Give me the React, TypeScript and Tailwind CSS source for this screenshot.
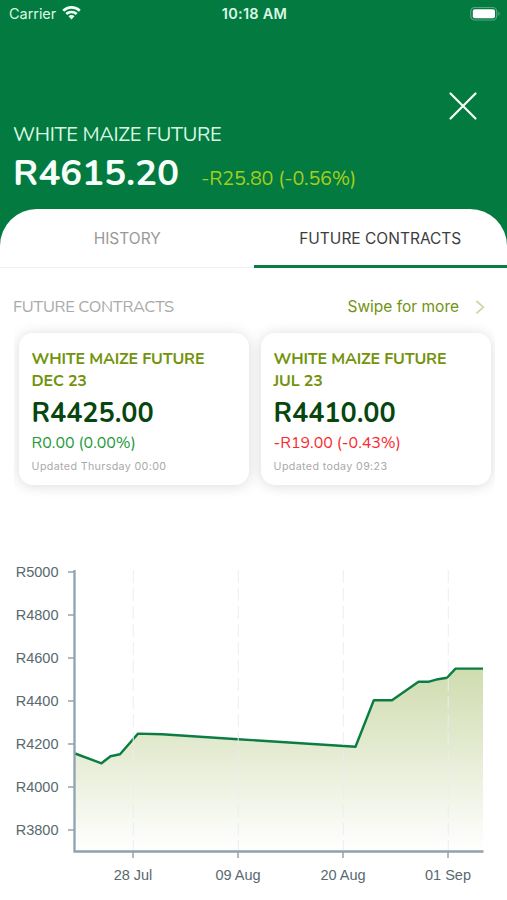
const nunito = "font-['Nunito','Lato',sans-serif]";

const contracts = [
  { month: 'DEC 23', price: 'R4425.00', change: 'R0.00 (0.00%)', tone: 'text-[#1f9a3c]', updated: 'Updated Thursday 00:00' },
  { month: 'JUL 23', price: 'R4410.00', change: '-R19.00 (-0.43%)', tone: 'text-[#f92a30]', updated: 'Updated today 09:23' },
];

const yTicks = [5000, 4800, 4600, 4400, 4200, 4000, 3800];
const xTicks = [
  { x: 133, label: '28 Jul' },
  { x: 238, label: '09 Aug' },
  { x: 343, label: '20 Aug' },
  { x: 448, label: '01 Sep' },
];
const line =
  'M75 753.5L101.5 763.3L110.5 756.2L120 754.3L138 733.6L162 734.3L238 739.2L355.5 746.7L373.8 700.3H392L418.5 681.7H429L438 679.2L447 677.8L455.5 668.6H483';

function StatusBar() {
  return (
    <div className="grid h-7 grid-cols-3 items-center pl-[9px] pr-[6px] font-['Inter',sans-serif] text-[#d9f8e4]">
      <div className="flex items-center gap-[6px]">
        <span className="text-[14.5px] tracking-[-0.05px]">Carrier</span>
        <svg className="-mt-0.5" width="19" height="14" viewBox="0 0 19 14" fill="#eefff4">
          <path d="M9.5 0C5.9 0 2.7 1.4.3 3.7l1.8 2a10.5 10.5 0 0 1 14.8 0l1.8-2A13.2 13.2 0 0 0 9.5 0Z" />
          <path d="M9.5 4.7c-2.3 0-4.5.8-6.1 2.4l1.8 2a6.1 6.1 0 0 1 8.6 0l1.8-2a8.7 8.7 0 0 0-6.1-2.4Z" />
          <path d="M9.5 9.1c-1.2 0-2.2.4-3 1.2l3 3.3 3-3.3c-.8-.8-1.8-1.2-3-1.2Z" />
        </svg>
      </div>
      <span className="-ml-px text-center text-[14.5px] font-semibold tracking-[0.25px]">10:18 AM</span>
      <svg className="-mt-px justify-self-end" width="32" height="16" viewBox="0 0 32 16">
        <rect x="1.7" y="1.5" width="26" height="12.5" rx="4" fill="none" stroke="#5ba579" strokeWidth="1.2" />
        <rect x="3.8" y="3.3" width="22.2" height="9" rx="2" fill="#fff" />
        <path d="M29.3 5.5v4.5c1.8-.8 1.8-3.7 0-4.5Z" fill="#5ba579" />
      </svg>
    </div>
  );
}

function PriceChart() {
  return (
    <svg className="block" width="507" height="350" viewBox="0 550 507 350" fontFamily="'Liberation Sans', sans-serif" fontSize="14.5" fill="#58696f">
      <defs>
        <linearGradient id="area" x1="0" y1="668" x2="0" y2="851" gradientUnits="userSpaceOnUse">
          <stop offset="0" stopColor="#cfdcaf" />
          <stop offset="0.45" stopColor="#e4ebd2" />
          <stop offset="1" stopColor="#fff" />
        </linearGradient>
      </defs>
      <path d={`${line}V851H75Z`} fill="url(#area)" />
      <path d={line} fill="none" stroke="#0b7d43" strokeWidth="2.4" strokeLinejoin="round" />
      {xTicks.map((t) => (
        <g key={t.label}>
          <path d={`M${t.x + 0.3} 570V850`} stroke="#e9eef0" strokeOpacity="0.75" strokeWidth="1.3" strokeDasharray="13 5" />
          <path d={`M${t.x} 852V858`} stroke="#90a4ae" strokeWidth="1.5" />
          <text x={t.x} y="880" textAnchor="middle">{t.label}</text>
        </g>
      ))}
      {yTicks.map((v, i) => (
        <g key={v}>
          <path d={`M68 ${572 + i * 43}H74`} stroke="#90a4ae" strokeWidth="1.5" />
          <text x="58.5" y={577 + i * 43} textAnchor="end">R{v}</text>
        </g>
      ))}
      <path d="M74.5 570V851.5H483.5" fill="none" stroke="#8fa2b1" strokeWidth="2.3" />
    </svg>
  );
}

export default function App() {
  return (
    <div className="flex h-[900px] w-[507px] flex-col overflow-hidden bg-white">
      <div className="bg-[#037a40]">
        <header className="h-[209px]">
          <StatusBar />
          <div className="flex justify-end pr-[29px] pt-[63px]">
            <svg width="30" height="30" viewBox="0 0 30 30" stroke="#f4fff8" strokeWidth="2.2" strokeLinecap="round">
              <path d="M2.5 2.5L27.5 27.5M27.5 2.5L2.5 27.5" />
            </svg>
          </div>
          <div className={`${nunito} pl-[13px]`}>
            <p className="text-[20px] leading-[28px] tracking-[-0.3px] text-[#d9f8e4]">WHITE MAIZE FUTURE</p>
            <div className="flex items-baseline gap-[22px]">
              <span className="text-[36.8px] font-bold leading-[48px] tracking-[-0.1px] text-[#f7fffa]">R4615.20</span>
              <span className="text-[19.8px] tracking-[-0.2px] text-[#a2cf1b]">-R25.80 (-0.56%)</span>
            </div>
          </div>
        </header>
        <nav className="grid h-[59px] grid-cols-2 rounded-t-[37px] bg-white font-['Inter',sans-serif] text-[15.5px]">
          <button className="border-b border-[#f0f0f0] pl-px pt-0.5 text-[#999]">HISTORY</button>
          <button className="border-b-[3px] border-[#0b7d43] pt-1 text-[#3d3d3d]">FUTURE CONTRACTS</button>
        </nav>
      </div>
      <section className="h-[282px]">
        <div className="flex h-[54px] items-center justify-between pl-[13px] pr-[22px] pt-[24px]">
          <h2 className={`${nunito} mt-px text-[16.4px] tracking-[-0.3px] text-[#aaa]`}>FUTURE CONTRACTS</h2>
          <div className="flex items-center gap-[16px] font-['Inter',sans-serif] text-[15.5px] text-[#729313]">
            Swipe for more
            <svg width="10" height="16" viewBox="0 0 10 16" fill="none" stroke="#c8d7a5" strokeWidth="1.7">
              <path d="M1.5 2L8.3 8.2L1.5 14.4" />
            </svg>
          </div>
        </div>
        <div className="ml-[14px] flex h-[175px] w-[481px] gap-3 overflow-hidden pl-[5.4px] pt-[11px]">
          {contracts.map((c) => (
            <article key={c.month} className={`${nunito} h-[152px] w-[230px] shrink-0 rounded-[14px] bg-white pl-[12.2px] pt-[15px] shadow-[0_1px_14px_rgba(0,0,0,0.15)]`}>
              <h3 className="text-[16px] font-bold leading-[22px] tracking-[-0.15px] text-[#73930d]">WHITE MAIZE FUTURE<br />{c.month}</h3>
              <p className="pt-px text-[27px] font-bold leading-[42px] tracking-[-0.05px] text-[#07460f]">{c.price}</p>
              <p className={`-mt-px text-[16px] leading-[18px] tracking-[-0.05px] ${c.tone}`}>{c.change}</p>
              <p className="mt-[8px] font-['Inter',sans-serif] text-[10.7px] leading-[14px] tracking-[0.36px] text-[#aaa]">{c.updated}</p>
            </article>
          ))}
        </div>
      </section>
      <PriceChart />
    </div>
  );
}
